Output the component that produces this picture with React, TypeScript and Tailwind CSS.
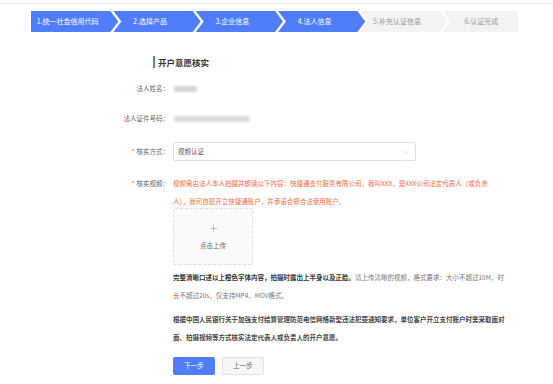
import { ChevronDown, Plus } from "lucide-react"

const steps = ["1.统一社会信用代码", "2.选择产品", "3.企业信息", "4.法人信息", "5.补充认证信息", "6.认证完成"]

export default function App() {
  const active = 3

  const clipFor = (i: number) => {
    if (i === 0) return "[clip-path:polygon(0_0,calc(100%_-_8px)_0,100%_50%,calc(100%_-_8px)_100%,0_100%)]"
    if (i === steps.length - 1) return "[clip-path:polygon(0_0,100%_0,100%_100%,0_100%,8px_50%)]"
    return "[clip-path:polygon(0_0,calc(100%_-_8px)_0,100%_50%,calc(100%_-_8px)_100%,0_100%,8px_50%)]"
  }

  return (
    <div className="w-[553px] h-[384px] bg-white overflow-hidden flex flex-col font-['Noto_Sans_CJK_SC','Microsoft_YaHei',sans-serif] text-[6.5px] text-[#666]">
      {/* top rule */}
      <div className="h-[4px] border-b border-[#e8e8e8]" />

      {/* Steps */}
      <div className="mt-[7px] ml-[31px] w-[487px] h-[21px] flex">
        {steps.map((s, i) => (
          <div
            key={s}
            className={`flex-1 h-full flex items-center justify-center text-[7px] whitespace-nowrap ${clipFor(i)} ${
              i > 0 ? "-ml-[5px]" : ""
            } ${i < steps.length - 1 ? "pr-[14px]" : "pl-[2px]"} ${
              i <= active ? "bg-[#4f7dfb] text-white" : "bg-[#f3f3f3] text-[#999]"
            }`}
          >
            {s}
          </div>
        ))}
      </div>

      {/* Heading */}
      <div className="mt-[24px] ml-[153px] h-[12px] flex items-center">
        <div className="w-[2px] h-[12px] bg-[#4f7dfb]" />
        <span className="ml-[3px] text-[8.5px] font-bold text-[#333]">开户意愿核实</span>
      </div>

      {/* Form */}
      <div className="ml-[100px] flex flex-col">
        <div className="mt-[13px] h-[16px] flex items-center">
          <div className="w-[69px] text-right">法人姓名：</div>
          <div className="ml-[5px] w-[23px] h-[6px] bg-[#d4d4d4] rounded-[2px] blur-[1px]" />
        </div>

        <div className="mt-[14px] h-[16px] flex items-center">
          <div className="w-[69px] text-right">法人证件号码：</div>
          <div className="ml-[5px] w-[76px] h-[6px] bg-[#dcdcdc] rounded-[2px] blur-[1px]" />
        </div>

        <div className="mt-[15px] h-[19px] flex items-center">
          <div className="w-[69px] text-right">
            <span className="text-[#f56b3b] mr-[2px]">*</span>核实方式：
          </div>
          <div className="ml-[4px] w-[243px] h-[19px] border border-[#dcdfe6] rounded-[2px] flex items-center justify-between pl-[4px] pr-[5px] text-[#555]">
            <span>视频认证</span>
            <ChevronDown size={8} strokeWidth={1.5} className="text-[#c0c4cc]" />
          </div>
        </div>

        <div className="mt-[13px] flex">
          <div className="w-[69px] text-right leading-[18px]">
            <span className="text-[#f56b3b] mr-[2px]">*</span>核实视频：
          </div>
          <div className="ml-[4px] flex flex-col">
            <div className="text-[#f56b3b] leading-[18px] whitespace-nowrap">
              <div>视频需由法人本人拍摄并朗读以下内容：快捷通支付服务有限公司，我叫XXX，是XXX公司法定代表人（或负责</div>
              <div>人），我司自愿开立快捷通账户，并承诺合规合法使用账户。</div>
            </div>

            <div className="mt-[-2px] w-[80px] h-[57px] border border-dashed border-[#dedede] bg-[#fafafa] rounded-[2px] flex flex-col items-center pt-[14px]">
              <Plus size={11} strokeWidth={1} className="text-[#888]" />
              <span className="mt-[7px] text-[#666]">点击上传</span>
            </div>

            <div className="mt-[3px] leading-[18px] whitespace-nowrap">
              <div>
                <span className="font-bold text-[#333]">完整清晰口述以上橙色字体内容，拍摄时露出上半身以及正脸。</span>
                <span className="text-[#777]">请上传清晰的视频，格式要求：大小不超过10M，时</span>
              </div>
              <div className="text-[#777]">长不超过20s，仅支持MP4、MOV格式。</div>
            </div>

            <div className="mt-[6px] leading-[18px] whitespace-nowrap font-bold text-[#444]">
              <div>根据中国人民银行关于加强支付结算管理防范电信网络新型违法犯罪通知要求，单位客户开立支付账户时需采取面对</div>
              <div>面、拍摄视频等方式核实法定代表人或负责人的开户意愿。</div>
            </div>

            <div className="mt-[11px] flex gap-[7px]">
              <button className="w-[42px] h-[18px] bg-[#4f7dfb] text-white rounded-[2px] flex items-center justify-center">
                下一步
              </button>
              <button className="w-[42px] h-[18px] bg-[#f6f6f6] border border-[#e2e2e2] text-[#666] rounded-[2px] flex items-center justify-center">
                上一步
              </button>
            </div>
          </div>
        </div>
      </div>
    </div>
  )
}
